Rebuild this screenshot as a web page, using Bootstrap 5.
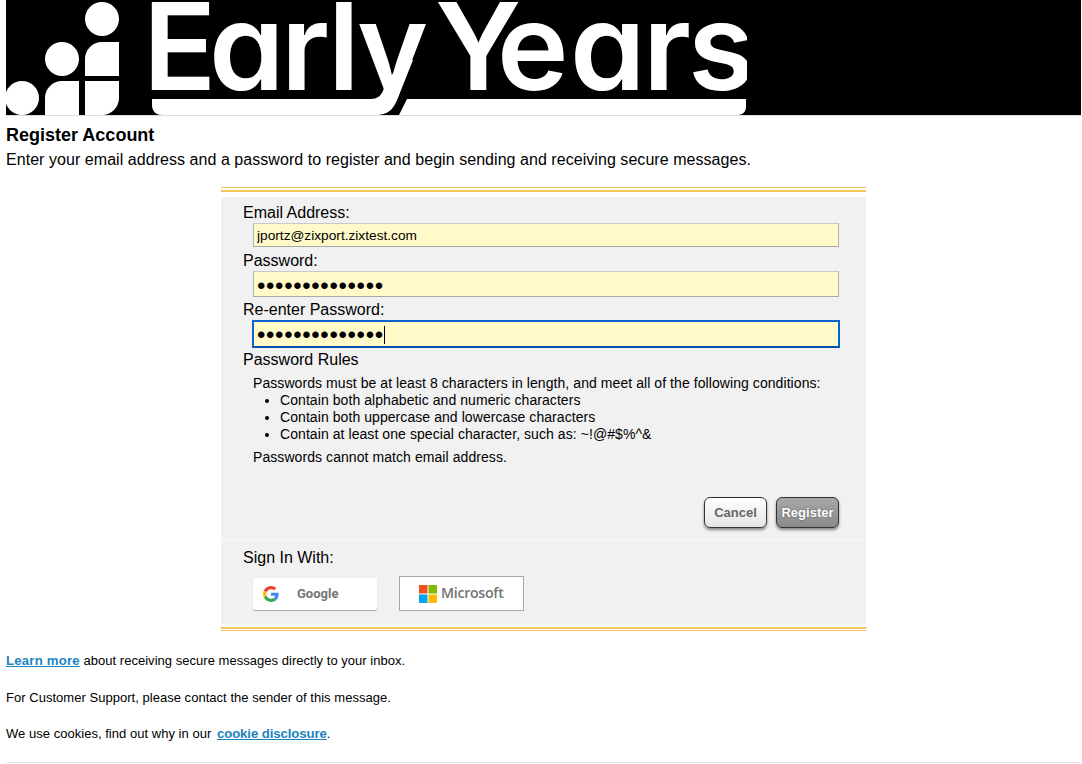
<!DOCTYPE html>
<html lang="en">
<head>
<meta charset="utf-8">
<title>Register Account</title>
<link href="https://cdn.jsdelivr.net/npm/bootstrap@5.3.0/dist/css/bootstrap.min.css" rel="stylesheet">
<style>
html,body{height:764px;overflow:hidden}
body{font-family:"Liberation Sans",Arial,sans-serif;color:#000;background:#fff;padding:0 1px 0 6px;font-size:16px;line-height:18px}
.brand-band{background:#000;height:116px;border-bottom:1px solid #ddd;overflow:hidden}
.brand-band svg{display:block}
.brand-text{font-family:Inter,sans-serif;font-weight:600;fill:#fff;font-feature-settings:"cv11" 1;font-size:121px}
.page-title{font-size:18px;font-weight:700;line-height:21px;margin:9px 0 4px;padding:0}
.page-intro{font-size:16px;line-height:19px;margin:0 0 18px;letter-spacing:.05px}
.panel-wrap{width:645px;margin:0 auto 0 215px;border-top:1px solid #f2c55c;padding-top:2px}
.panel-rule{height:2px;background:#f2c55c}
.panel-body{background:#f1f1f1;margin-top:5px}
.panel-foot{margin-top:3px;padding-bottom:1px;border-bottom:1px solid #f2c55c}
.field-area{padding:7px 27px 0 22px;height:343px}
.field-label{font-size:16px;line-height:18px;margin:0;display:block}
.entry{display:block;width:586px;height:26px;margin:1px 0 4px 10px;background:#fffac8;border:1px solid #b4b4b4;border-top-color:#c8c8c8;border-bottom-color:#a8a8a8;padding:0 3px;font:14px/24px "Liberation Sans",sans-serif;color:#000;border-radius:0;outline:0}
#em{height:24px;margin-bottom:5px;font-size:13.7px;padding-top:2px}
.entry.pw{font-size:24px;letter-spacing:.65px;line-height:24px;padding-top:3px}
.entry-wrap{position:relative}
.entry-wrap .entry{height:28px;width:588px;margin:1px 0 0 9px;border:2px solid #0e62d0;border-bottom-color:#0b4fb0;padding:2px 3px 0}
.text-caret{position:absolute;left:141px;top:6px;width:1px;height:18px;background:#000}
.rules-title{font-size:16px;line-height:18px;margin:3px 0 6px}
.rules{font-size:14px;line-height:17px;margin-left:10px;letter-spacing:.07px}
.rules ul{margin:0;padding-left:27px}
.rules p{margin:0}
.rules .last-rule{margin-top:6px}
.action-row{justify-content:flex-end;margin-top:31px;gap:9px}
.act{width:63px;height:31px;border:1px solid #333;border-radius:6px;font:700 13px/1 "Liberation Sans",sans-serif;padding:0;box-shadow:0 2px 3px rgba(0,0,0,.45)}
.act-cancel{background:linear-gradient(#fff,#e4e4e4);color:#666}
.act-register{background:linear-gradient(#a8a8a8,#8a8a8a);color:#fff;text-shadow:0 0 2px #555}
.signin-area{border-top:1px solid #fafafa;padding:8px 22px 0;height:84px}
.sso-row{margin:9px 0 0 10px;gap:22px;align-items:center}
.sso-google{width:124px;height:32px;background:#fff;border-radius:2px;box-shadow:0 1px 1px rgba(0,0,0,.3);display:flex;align-items:center;padding-left:10px;font:700 13px/1 Roboto,sans-serif;color:#757575}
.sso-google span{margin-left:18px}
.sso-ms{width:125px;height:35px;background:#fff;border:1px solid #a8a8a8;display:flex;align-items:center;padding-left:19px;font:600 14.2px/1 "Open Sans",sans-serif;color:#737373;letter-spacing:-.3px}
.sso-ms svg{margin-right:4px}
.foot{margin-top:23px}
.foot p{font-size:13px;line-height:14px;margin:0 0 23px;letter-spacing:.03px}
.foot p:nth-of-type(2){margin-bottom:22px}
.foot p:last-of-type{margin-bottom:21px}
.foot a{font-size:13.2px;font-weight:700;color:#1b84c0}
.foot a.learn-link{letter-spacing:.2px}
.foot a.cookie-link{letter-spacing:-.1px;margin-left:2px}
.foot-rule{margin:0;border:0;border-top:1px solid #e8e8e8;opacity:1}
</style>
</head>
<body>
<div class="brand-band">
  <svg width="741" height="115" viewBox="0 0 741 115" xmlns="http://www.w3.org/2000/svg" role="img" aria-label="Early Years">
    <g fill="#fff">
      <circle cx="96" cy="19" r="17"/>
      <circle cx="56" cy="59" r="17"/>
      <circle cx="16" cy="98" r="17"/>
      <path d="M79 76V59a17 17 0 0 1 17-17h17v34z"/>
      <path d="M39 115V98a17 17 0 0 1 17-17h17v34z"/>
      <path d="M79 81h34v17a17 17 0 0 1-17 17H79z"/>
      <path d="M146 99H365C372 99 376 95 378 88L395 60H407L391 100C387 110 381 115 370 115H156C149 115 146 110 146 105z"/>
      <path d="M401 99H740V107C740 112 736 115 732 115H393z"/>
    </g>
    <text class="brand-text" x="137 203 275 322 351" y="90">Early</text>
    <text class="brand-text" x="429 491 564 637 682" y="90">Years</text>
  </svg>
</div>
<h1 class="page-title">Register Account</h1>
<p class="page-intro">Enter your email address and a password to register and begin sending and receiving secure messages.</p>
<div class="panel-wrap">
  <div class="panel-rule"></div>
  <div class="panel-body">
    <form class="field-area">
      <label class="field-label" for="em">Email Address:</label>
      <input class="entry" id="em" type="text" value="jportz@zixport.zixtest.com">
      <label class="field-label" for="p1">Password:</label>
      <input class="entry pw" id="p1" type="password" value="abcdefghijklmn">
      <label class="field-label" for="p2">Re-enter Password:</label>
      <div class="entry-wrap">
        <input class="entry pw" id="p2" type="password" value="abcdefghijklmn">
        <span class="text-caret"></span>
      </div>
      <div class="rules-title">Password Rules</div>
      <div class="rules">
        <p>Passwords must be at least 8 characters in length, and meet all of the following conditions:</p>
        <ul>
          <li>Contain both alphabetic and numeric characters</li>
          <li>Contain both uppercase and lowercase characters</li>
          <li>Contain at least one special character, such as: ~!@#$%^&amp;</li>
        </ul>
        <p class="last-rule">Passwords cannot match email address.</p>
      </div>
      <div class="d-flex action-row">
        <button type="button" class="act act-cancel">Cancel</button>
        <button type="button" class="act act-register">Register</button>
      </div>
    </form>
    <div class="signin-area">
      <div class="field-label">Sign In With:</div>
      <div class="d-flex sso-row">
        <div class="sso-google">
          <svg width="16" height="16" viewBox="0 0 48 48"><path fill="#EA4335" d="M24 9.500c3.500 0 6.700 1.200 9.200 3.600l6.900-6.900C35.900 2.400 30.500 0 24 0 14.600 0 6.500 5.400 2.600 13.200l8 6.200C12.400 13.700 17.700 9.500 24 9.500z"/><path fill="#4285F4" d="M47 24.500c0-1.600-.1-3.100-.4-4.500H24v9h12.900c-.6 3-2.200 5.500-4.700 7.200l7.700 6C44.400 38 47 31.800 47 24.500z"/><path fill="#FBBC05" d="M10.500 28.600C10 27.200 9.700 25.600 9.700 24s.3-3.200.8-4.600l-8-6.200C1 16.400 0 20.100 0 24s1 7.600 2.600 10.800l7.900-6.200z"/><path fill="#34A853" d="M24 48c6.500 0 11.900-2.100 15.900-5.800l-7.700-6c-2.200 1.400-4.900 2.300-8.200 2.300-6.300 0-11.600-4.200-13.500-9.900l-7.900 6.200C6.500 42.600 14.600 48 24 48z"/></svg>
          <span>Google</span>
        </div>
        <div class="sso-ms">
          <svg width="18" height="18" viewBox="0 0 18 18"><rect width="8.500" height="8.500" fill="#f25022"/><rect x="9.500" width="8.500" height="8.500" fill="#7fba00"/><rect y="9.500" width="8.500" height="8.500" fill="#00a4ef"/><rect x="9.500" y="9.500" width="8.500" height="8.500" fill="#ffb900"/></svg>
          Microsoft
        </div>
      </div>
    </div>
  </div>
  <div class="panel-foot"><div class="panel-rule"></div></div>
</div>
<div class="foot">
  <p><a class="learn-link" href="#">Learn more</a> about receiving secure messages directly to your inbox.</p>
  <p>For Customer Support, please contact the sender of this message.</p>
  <p>We use cookies, find out why in our <a class="cookie-link" href="#">cookie disclosure</a>.</p>
  <hr class="foot-rule">
</div>
</body>
</html>
